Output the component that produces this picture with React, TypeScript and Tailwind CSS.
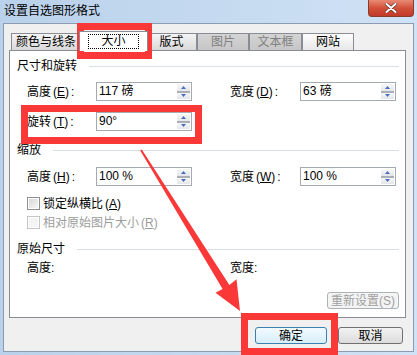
import type { ReactNode } from 'react'

const tabs = [
  { label: '颜色与线条', w: 'w-[70px]', kind: 'normal' },
  { label: '大小', w: 'w-[69px]', kind: 'active' },
  { label: '版式', w: 'w-[51px]', kind: 'normal' },
  { label: '图片', w: 'w-[52px]', kind: 'disabled' },
  { label: '文本框', w: 'w-[53px]', kind: 'disabled' },
  { label: '网站', w: 'w-[52px]', kind: 'hover' },
]

function Tab({ label, w, kind }: { label: string; w: string; kind: string }) {
  if (kind === 'active') {
    return (
      <div className={`${w} -mx-[2px] h-[20px] -mb-px relative z-10 bg-white border border-b-0 border-[#898c95] flex items-center justify-center`}>
        <span className="border border-dotted border-black px-[12px] leading-[13px]">{label}</span>
      </div>
    )
  }
  const bg =
    kind === 'disabled'
      ? 'bg-gradient-to-b from-[#d4d4d4] to-[#c6c6c6] text-[#808080]'
      : kind === 'hover'
        ? 'bg-gradient-to-b from-[#fdfdfd] to-[#e8e8e8] text-black'
        : 'bg-gradient-to-b from-[#f4f4f4] to-[#d9d9d9] text-black'
  return (
    <div className={`${w} h-[17px] border border-b-0 border-[#898c95] flex items-center justify-center leading-[14px] ${bg}`}>
      {label}
    </div>
  )
}

function Arrow({ up }: { up?: boolean }) {
  return (
    <svg width="5" height="3" viewBox="0 0 5 3">
      <path d={up ? 'M2.5 0L5 3H0z' : 'M0 0H5L2.5 3z'} fill="#4a6cc0" />
    </svg>
  )
}

function Spin({ value }: { value: string }) {
  return (
    <div className="w-[96px] h-[19px] border border-[#a4aab3] bg-white flex items-stretch">
      <span className="flex-1 pl-[2px] leading-[17px]">{value}</span>
      <div className="w-[15px] flex flex-col p-px">
        <div className="flex-1 flex items-center justify-center bg-gradient-to-b from-[#f7f7f7] to-[#e4e6ea]">
          <Arrow up />
        </div>
        <div className="h-[2px] bg-[#a9aeb7]" />
        <div className="flex-1 flex items-center justify-center bg-gradient-to-b from-[#f7f7f7] to-[#e4e6ea]">
          <Arrow />
        </div>
      </div>
    </div>
  )
}

function Header({ title, className }: { title: string; className: string }) {
  return (
    <div className={`flex items-center h-[14px] pl-[7px] pr-[6px] ${className}`}>
      <span className="leading-[14px]">{title}</span>
      <div className="flex-1 ml-[12px] h-px bg-[#d5dfe5]" />
    </div>
  )
}

function Label({ text, k }: { text: string; k: string }) {
  return (
    <span className="w-[69px] leading-[14px]">
      {text}
      <span className="ml-[2px]">(</span>
      <span className="underline">{k}</span>
      <span className="mr-[2px]">)</span>:
    </span>
  )
}

function Row({ children, className }: { children: ReactNode; className: string }) {
  return <div className={`flex items-center h-[19px] pl-[17px] ${className}`}>{children}</div>
}

function Check({ text, k, disabled, className }: { text: string; k: string; disabled?: boolean; className: string }) {
  return (
    <div className={`flex items-center h-[13px] pl-[17px] ${className}`}>
      <div className={`w-[13px] h-[13px] border p-px ${disabled ? 'border-[#c4c4c4]' : 'border-[#8e8f8f]'}`}>
        <div className={`w-full h-full ${disabled ? 'bg-[#f4f4f4]' : 'bg-gradient-to-br from-[#d8d8d8] to-[#f6f6f6]'}`} />
      </div>
      <span className={`ml-[3px] leading-[14px] ${disabled ? 'text-[#9c9c9c]' : 'text-black'}`}>
        {text}
        <span className="ml-[2px]">(</span>
        <span className="underline">{k}</span>)
      </span>
    </div>
  )
}

export default function App() {
  return (
    <div className="relative w-[417px] h-[355px] overflow-hidden bg-gradient-to-r from-[#b9d1ea] to-[#d0e2f5] text-[12px] text-black font-['Liberation_Sans','Noto_Sans_CJK_SC',sans-serif]">
      <div className="h-[23px] flex items-start">
        <span className="pl-[4px] pt-[4px] leading-[15px] flex-1">设置自选图形格式</span>
        <div className="mr-[3px] w-[46px] h-[17px] rounded-b-[4px] border border-t-0 border-[#8c3a2c] bg-gradient-to-b from-[#e88a74] via-[#d2503a] to-[#c23a28] flex items-center justify-center">
          <svg width="12" height="10" viewBox="0 0 12 10">
            <path d="M1.5 1L10.5 9M10.5 1L1.5 9" stroke="#5a2a22" strokeWidth="3.2" strokeLinecap="round" />
            <path d="M1.5 1L10.5 9M10.5 1L1.5 9" stroke="#fff" strokeWidth="2" strokeLinecap="round" />
          </svg>
        </div>
      </div>

      <div className="mx-[3px] h-[329px] border border-[#8b9bb0] bg-[#f0f0f0] flex flex-col">
        <div className="h-[26px] flex items-end pl-[7px]">
          {tabs.map((t) => (
            <Tab key={t.label} {...t} />
          ))}
        </div>

        <div className="ml-[5px] w-[397px] h-[268px] border border-[#898c95] bg-white flex flex-col">
          <Header title="尺寸和旋转" className="mt-[8px]" />
          <Row className="mt-[9px]">
            <Label text="高度" k="E" />
            <Spin value="117 磅" />
            <span className="ml-[38px]" />
            <Label text="宽度" k="D" />
            <span className="w-px" />
            <Spin value="63 磅" />
          </Row>
          <Row className="mt-[11px]">
            <Label text="旋转" k="T" />
            <Spin value="90°" />
          </Row>

          <Header title="缩放" className="mt-[12px]" />
          <Row className="mt-[10px]">
            <Label text="高度" k="H" />
            <Spin value="100 %" />
            <span className="ml-[38px]" />
            <Label text="宽度" k="W" />
            <span className="w-px" />
            <Spin value="100 %" />
          </Row>
          <Check text="锁定纵横比" k="A" className="mt-[11px]" />
          <Check text="相对原始图片大小" k="R" disabled className="mt-[6px]" />

          <Header title="原始尺寸" className="mt-[13px]" />
          <div className="flex items-center h-[14px] pl-[17px] mt-[5px]">
            <span className="w-[203px] leading-[14px]">高度:</span>
            <span className="leading-[14px]">宽度:</span>
          </div>
          <div className="flex justify-end pr-[6px] mt-[17px]">
            <div className="w-[72px] h-[17px] rounded-[3px] border border-[#adb2b5] bg-[#f4f4f4] text-[#a0a0a0] flex items-center justify-center leading-[14px]">
              重新设置(S)
            </div>
          </div>
        </div>

        <div className="flex justify-end gap-[11px] pr-[10px] mt-[9px]">
          <div className="w-[72px] h-[17px] rounded-[3px] border border-[#3c7fb1] bg-gradient-to-b from-[#f3fafe] to-[#d6eefc] flex items-center justify-center leading-[14px]">
            确定
          </div>
          <div className="w-[65px] h-[17px] rounded-[3px] border border-[#707070] bg-gradient-to-b from-[#f2f2f2] to-[#dcdcdc] flex items-center justify-center leading-[14px]">
            取消
          </div>
        </div>
      </div>

      <svg className="absolute inset-0 pointer-events-none" width="417" height="355" viewBox="0 0 417 355">
        <g fill="none" stroke="#fb3838" strokeWidth="7">
          <rect x="80.5" y="26.5" width="68" height="29" />
          <rect x="24.5" y="108.5" width="174" height="32" />
          <rect x="244.5" y="316.5" width="90" height="35" />
        </g>
        <polygon
          fill="#fb3838"
          points="141.8,149.5 229.4,284.9 236.5,279.3 240,311 215.5,292.7 222.6,289.1 140.2,150.5"
        />
      </svg>
    </div>
  )
}
